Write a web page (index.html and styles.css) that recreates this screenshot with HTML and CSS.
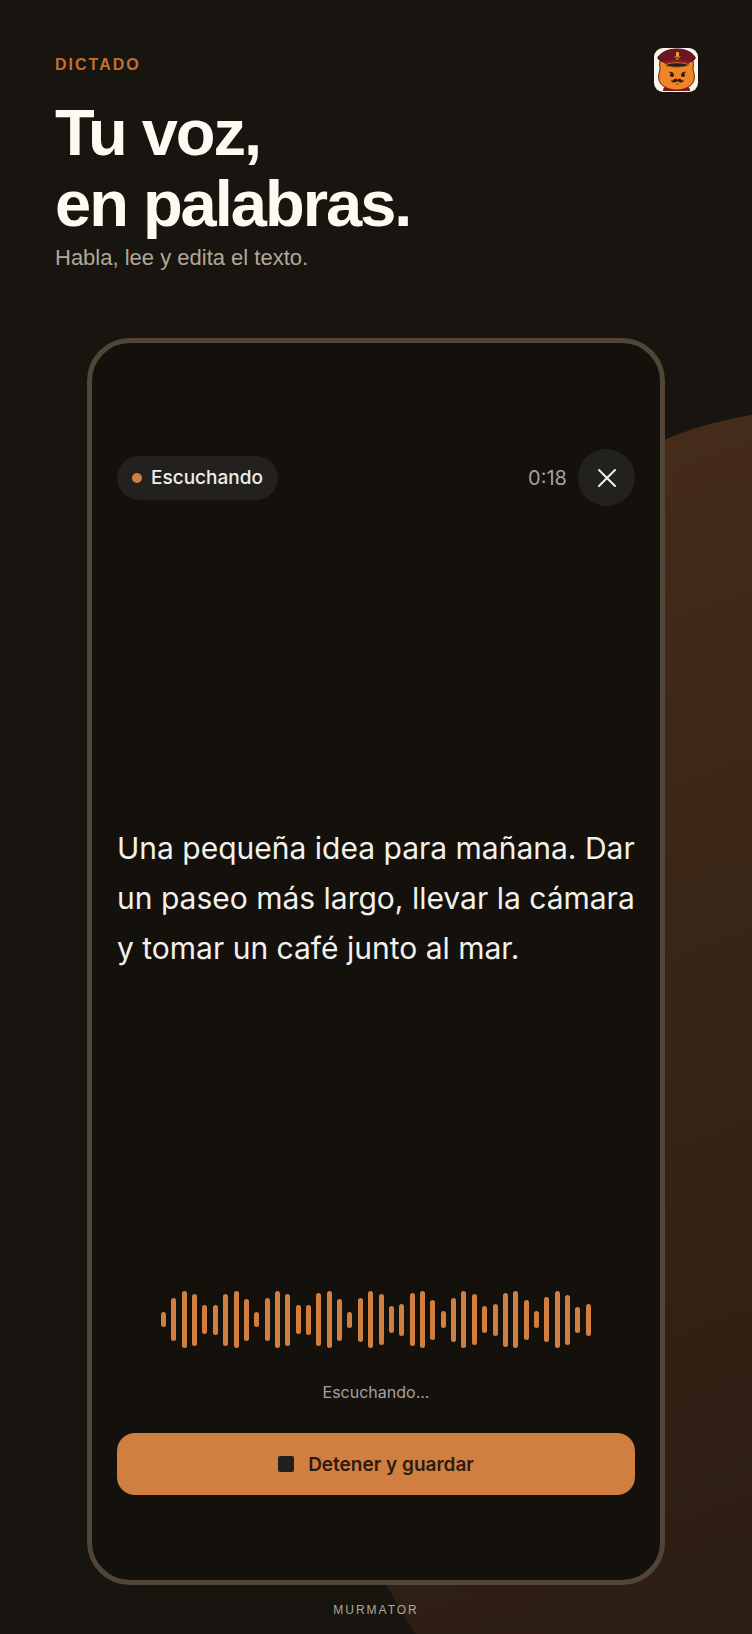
FILE: index.html
```html
<!DOCTYPE html>
<html lang="es">
<head>
    <meta charset="UTF-8">
    <meta name="viewport" content="width=device-width, initial-scale=1.0">
    <title>Murmator - Dictado</title>
    <link rel="stylesheet" href="styles.css">
</head>
<body>
    <div class="page">
        <header class="header">
            <div>
                <p class="eyebrow">DICTADO</p>
                <h1>Tu voz,<br>en palabras.</h1>
                <p class="subtitle">Habla, lee y edita el texto.</p>
            </div>
            <svg class="logo" viewBox="0 0 44 44" role="img" aria-label="Murmator">
                <rect width="44" height="44" rx="9" fill="#fbf5ee"/>
                <path d="M9 43c0-3 1-4 4-5h19c3 1 4 2 4 5z" fill="#7d1720"/>
                <path d="M6 13c3 0 5 2 7 4h19c2-2 4-4 7-4 1 3 0 6 0 9 3 8 1 14-5 17-5 4-17 4-23 0-6-3-8-9-5-17 0-3-1-6 0-9z" fill="#f08427" stroke="#5a2412" stroke-width="1"/>
                <path d="M4 9C8 4 14 1 23 1c8 0 15 3 18 8 1 3-3 4-6 5l-1 2H12l-1-2C8 13 3 12 4 9z" fill="#6d1520" stroke="#451018" stroke-width="1"/>
                <path d="M11 13c7-2 17-2 24 0v3H11z" fill="#8c1b28"/>
                <path d="M11 17c5-3 19-3 24 0-4 3-20 3-24 0z" fill="#2e1d15" stroke="#b9762b" stroke-width="1"/>
                <rect x="22" y="4" width="3" height="5" rx="1" fill="#eda03a"/>
                <path d="M21 8c0 3 5 3 5 0M23 10v2" fill="none" stroke="#d98a34" stroke-width="1"/>
                <path d="M15 24l4 1M32 24l-4 1" stroke="#3a1c10" stroke-width="1"/>
                <circle cx="18" cy="27" r="2" fill="#2b1510"/>
                <circle cx="29" cy="27" r="2" fill="#2b1510"/>
                <path d="M23.500 32c-2-2-3-1-4 0-1 1-2 1-3 0 1 3 5 3 7 1 2 2 6 2 7-1-1 1-2 1-3 0-1-1-2-2-4 0z" fill="#2b1510"/>
                <path d="M22 36h3" stroke="#8a4216" stroke-width="1"/>
            </svg>
        </header>

        <main class="phone">
            <div class="topbar">
                <div class="status"><span class="dot"></span>Escuchando</div>
                <span class="time">0:18</span>
                <button class="close" aria-label="Cerrar">
                    <svg viewBox="0 0 20 20" width="20" height="20">
                        <path d="M2 2l16 16M18 2L2 18" stroke="#f3f1ec" stroke-width="2" stroke-linecap="round"/>
                    </svg>
                </button>
            </div>

            <p class="transcript">Una pequeña idea para mañana. Dar<br>un paseo más largo, llevar la cámara<br>y tomar un café junto al mar.</p>

            <div class="recorder">
                <div class="wave" id="wave"></div>
                <p class="hint">Escuchando...</p>
                <button class="stop"><span class="square"></span>Detener y guardar</button>
            </div>
        </main>

        <footer>MURMATOR</footer>
    </div>

    <script>
        const levels = [
            15, 43, 57, 52, 29, 30, 52, 57, 42, 15,
            43, 57, 52, 29, 30, 53, 57, 42, 16,
            44, 57, 51, 27, 32, 53, 57, 40, 17,
            44, 57, 51, 27, 32, 54, 57, 40, 17,
            45, 57, 50, 26, 32
        ];
        const wave = document.getElementById('wave');

        levels.forEach(level => {
            const bar = document.createElement('span');
            bar.style.height = level + 'px';
            wave.appendChild(bar);
        });
    </script>
</body>
</html>
```
FILE: styles.css
```css
* {
    box-sizing: border-box;
}

body {
    margin: 0;
    background-color: #181410;
    color: #fff9f2;
    font-family: "Liberation Sans", Arial, sans-serif;
}

p,
h1 {
    margin: 0;
}

button {
    border: none;
    padding: 0;
    font-family: inherit;
    cursor: pointer;
}

.page {
    position: relative;
    min-height: 100vh;
    display: flex;
    flex-direction: column;
    overflow: hidden;
}

/* big shape behind the phone */
.page::before {
    content: "";
    position: absolute;
    left: 37%;
    bottom: -15%;
    width: 144%;
    height: 90%;
    border-radius: 50%;
    background: linear-gradient(160deg, #442b1a 10%, #3a2616 35%, #2f1f14 65%, #261a11 100%);
}

.header {
    display: flex;
    justify-content: space-between;
    align-items: flex-start;
    padding: 48px 54px 0 55px;
}

.eyebrow {
    margin-top: 7px;
    font-size: 16px;
    line-height: 20px;
    font-weight: bold;
    letter-spacing: 2px;
    color: #c1702d;
}

h1 {
    margin-top: 22px;
    font-size: 65px;
    line-height: 71px;
    letter-spacing: -2px;
}

.subtitle {
    margin-top: 6px;
    font-size: 22px;
    line-height: 26px;
    color: #b3a797;
}

.logo {
    width: 44px;
    height: 44px;
}

.phone {
    position: relative;
    flex: 1;
    display: flex;
    flex-direction: column;
    margin: 67px 87px 0;
    padding: 106px 25px 85px;
    border: 5px solid #504537;
    border-radius: 43px;
    background-color: #14110d;
    font-family: Inter, sans-serif;
}

.topbar {
    display: flex;
    align-items: center;
    gap: 11px;
}

.status {
    display: flex;
    align-items: center;
    gap: 9px;
    height: 44px;
    padding: 0 15px;
    border-radius: 22px;
    background-color: #22211e;
    color: #f0eee9;
    font-size: 19px;
    font-weight: 500;
}

.dot {
    width: 10px;
    height: 10px;
    border-radius: 50%;
    background-color: #d17f40;
}

.time {
    margin-left: auto;
    font-size: 20px;
    color: #a3a19d;
}

.close {
    display: flex;
    align-items: center;
    justify-content: center;
    width: 57px;
    height: 57px;
    border-radius: 50%;
    background-color: #22211e;
}

.transcript {
    margin: auto 0;
    padding-bottom: 2px;
    font-size: 30px;
    line-height: 50px;
    white-space: nowrap;
    color: #f3f1ec;
}

.wave {
    display: flex;
    justify-content: space-between;
    align-items: center;
    height: 57px;
    margin: 0 44px;
}

.wave span {
    width: 5px;
    border-radius: 3px;
    background-color: #d17f40;
}

.hint {
    margin: 34px 0 31px;
    font-size: 16px;
    line-height: 20px;
    text-align: center;
    color: #a3a19d;
}

.stop {
    display: flex;
    align-items: center;
    justify-content: center;
    gap: 14px;
    width: 100%;
    height: 62px;
    border-radius: 18px;
    background-color: #d17f40;
    color: #2b1b10;
    font-size: 19px;
    font-weight: 600;
}

.square {
    width: 16px;
    height: 16px;
    border-radius: 2px;
    background-color: #22201d;
}

footer {
    position: relative;
    padding: 18px 0 16px;
    font-size: 12px;
    line-height: 15px;
    letter-spacing: 2px;
    text-align: center;
    color: #b3a797;
}
```
